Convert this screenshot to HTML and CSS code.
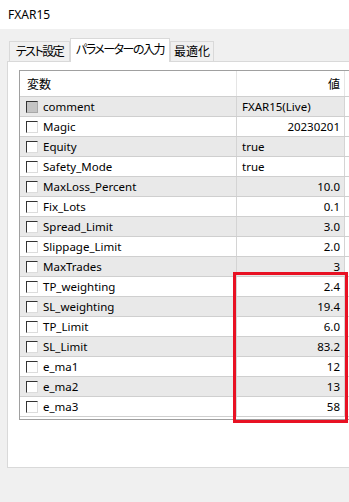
FILE: index.html
```html
<!DOCTYPE html>
<html lang="ja">
<head>
<meta charset="utf-8">
<link rel="stylesheet" href="styles.css">
</head>
<body>
<div class="window">
  <div class="titlebar">FXAR15</div>
  <div class="tabs">
    <div class="tab t1 kana">テスト設定</div>
    <div class="tab t2 kana active">パラメーターの入力</div>
    <div class="tab t3">最適化</div>
  </div>
  <div class="panel">
    <div class="grid">
      <div class="row head">
        <div class="c-name">変数</div>
        <div class="c-val right">値</div>
        <div class="c-rest"></div>
      </div>
      <div class="row alt"><div class="c-name"><span class="cb dis"></span>comment</div><div class="c-val">FXAR15(Live)</div><div class="c-rest"></div></div>
      <div class="row"><div class="c-name"><span class="cb"></span>Magic</div><div class="c-val right">20230201</div><div class="c-rest"></div></div>
      <div class="row alt"><div class="c-name"><span class="cb"></span>Equity</div><div class="c-val">true</div><div class="c-rest"></div></div>
      <div class="row"><div class="c-name"><span class="cb"></span>Safety_Mode</div><div class="c-val">true</div><div class="c-rest"></div></div>
      <div class="row alt"><div class="c-name"><span class="cb"></span>MaxLoss_Percent</div><div class="c-val right">10.0</div><div class="c-rest"></div></div>
      <div class="row"><div class="c-name"><span class="cb"></span>Fix_Lots</div><div class="c-val right">0.1</div><div class="c-rest"></div></div>
      <div class="row alt"><div class="c-name"><span class="cb"></span>Spread_Limit</div><div class="c-val right">3.0</div><div class="c-rest"></div></div>
      <div class="row"><div class="c-name"><span class="cb"></span>Slippage_Limit</div><div class="c-val right">2.0</div><div class="c-rest"></div></div>
      <div class="row alt"><div class="c-name"><span class="cb"></span>MaxTrades</div><div class="c-val right">3</div><div class="c-rest"></div></div>
      <div class="row"><div class="c-name"><span class="cb"></span>TP_weighting</div><div class="c-val right">2.4</div><div class="c-rest"></div></div>
      <div class="row alt"><div class="c-name"><span class="cb"></span>SL_weighting</div><div class="c-val right">19.4</div><div class="c-rest"></div></div>
      <div class="row"><div class="c-name"><span class="cb"></span>TP_Limit</div><div class="c-val right">6.0</div><div class="c-rest"></div></div>
      <div class="row alt"><div class="c-name"><span class="cb"></span>SL_Limit</div><div class="c-val right">83.2</div><div class="c-rest"></div></div>
      <div class="row"><div class="c-name"><span class="cb"></span>e_ma1</div><div class="c-val right">12</div><div class="c-rest"></div></div>
      <div class="row alt"><div class="c-name"><span class="cb"></span>e_ma2</div><div class="c-val right">13</div><div class="c-rest"></div></div>
      <div class="row"><div class="c-name"><span class="cb"></span>e_ma3</div><div class="c-val right">58</div><div class="c-rest"></div></div>
      <div class="filler"></div>
    </div>
  </div>
  <div class="highlight"></div>
</div>
</body>
</html>
```
FILE: styles.css
```css
html, body {
  margin: 0;
  padding: 0;
}
body {
  background: #f0f0f0;
  overflow: hidden;
  width: 349px;
  height: 502px;
  font-family: "Noto Sans", "Noto Sans CJK JP", sans-serif;
  font-size: 11.5px;
  color: #000;
}
.window {
  position: relative;
  width: 349px;
  height: 502px;
  overflow: hidden;
}
.titlebar {
  height: 29px;
  line-height: 29px;
  background: #fff;
  padding-left: 8px;
  font-size: 12px;
}
.tabs {
  display: flex;
  align-items: flex-end;
  padding-top: 9px;
  padding-left: 9px;
  height: 23px;
  font-family: "Noto Sans CJK JP", sans-serif;
  font-feature-settings: "palt";
  font-size: 12px;
}
.tab {
  box-sizing: border-box;
  height: 20px;
  line-height: 18px;
  border: 1px solid #d9d9d9;
  border-bottom: none;
  background: #f0f0f0;
  color: #000;
  text-align: center;
  white-space: nowrap;
}
.tab.kana {
  letter-spacing: -1.5px;
}
.t1 { width: 61px; }
.t2 { width: 100px; }
.t3 { width: 44px; }
.tab.active {
  height: 24px;
  line-height: 20px;
  background: #fff;
  margin-bottom: -1px;
  position: relative;
  z-index: 1;
}
.panel {
  box-sizing: border-box;
  margin-left: 7px;
  width: 360px;
  height: 407px;
  background: #fff;
  border: 1px solid #d9d9d9;
  padding: 8px 0 0 11px;
}
.grid {
  border: 1px solid #a0a0a0;
  border-right: none;
  height: 350px;
  box-sizing: border-box;
}
.row {
  display: flex;
  height: 20px;
  box-sizing: border-box;
  border-bottom: 1px solid #cfcfcf;
  background: #fff;
}
.row.alt {
  background: #e9e9e9;
}
.row.head {
  height: 26px;
  border-bottom: 1px solid #cfcfcf;
  font-family: "Noto Sans CJK JP", sans-serif;
  font-size: 12px;
}
.c-name {
  width: 217px;
  box-sizing: border-box;
  border-right: 1px solid #d4d4d4;
  display: flex;
  align-items: center;
  padding-left: 6px;
  white-space: nowrap;
}
.head .c-name {
  padding-left: 7px;
  border-right: 1px solid #e5e5e5;
}
.c-val {
  width: 108px;
  box-sizing: border-box;
  border-right: 1px solid #d4d4d4;
  display: flex;
  align-items: center;
  padding: 0 4px 0 5px;
  white-space: nowrap;
}
.head .c-val {
  border-right: 1px solid #e5e5e5;
}
.c-val.right {
  justify-content: flex-end;
}
.c-rest {
  flex: 1;
  background: #fff;
}
.cb {
  display: inline-block;
  box-sizing: border-box;
  width: 12px;
  height: 12px;
  border-top: 1px solid #333;
  border-left: 1px solid #333;
  border-right: 1px solid #dcdcdc;
  border-bottom: 1px solid #dcdcdc;
  background: #fff;
  margin-right: 5px;
  flex: none;
}
.cb.dis {
  background: #c4c4c4;
  border-right-color: #a8a8a8;
  border-bottom-color: #a8a8a8;
}
.filler {
  height: 4px;
}
.highlight {
  position: absolute;
  left: 233px;
  top: 272px;
  width: 115px;
  height: 151px;
  box-sizing: border-box;
  border: 3px solid #e81123;
}
```
